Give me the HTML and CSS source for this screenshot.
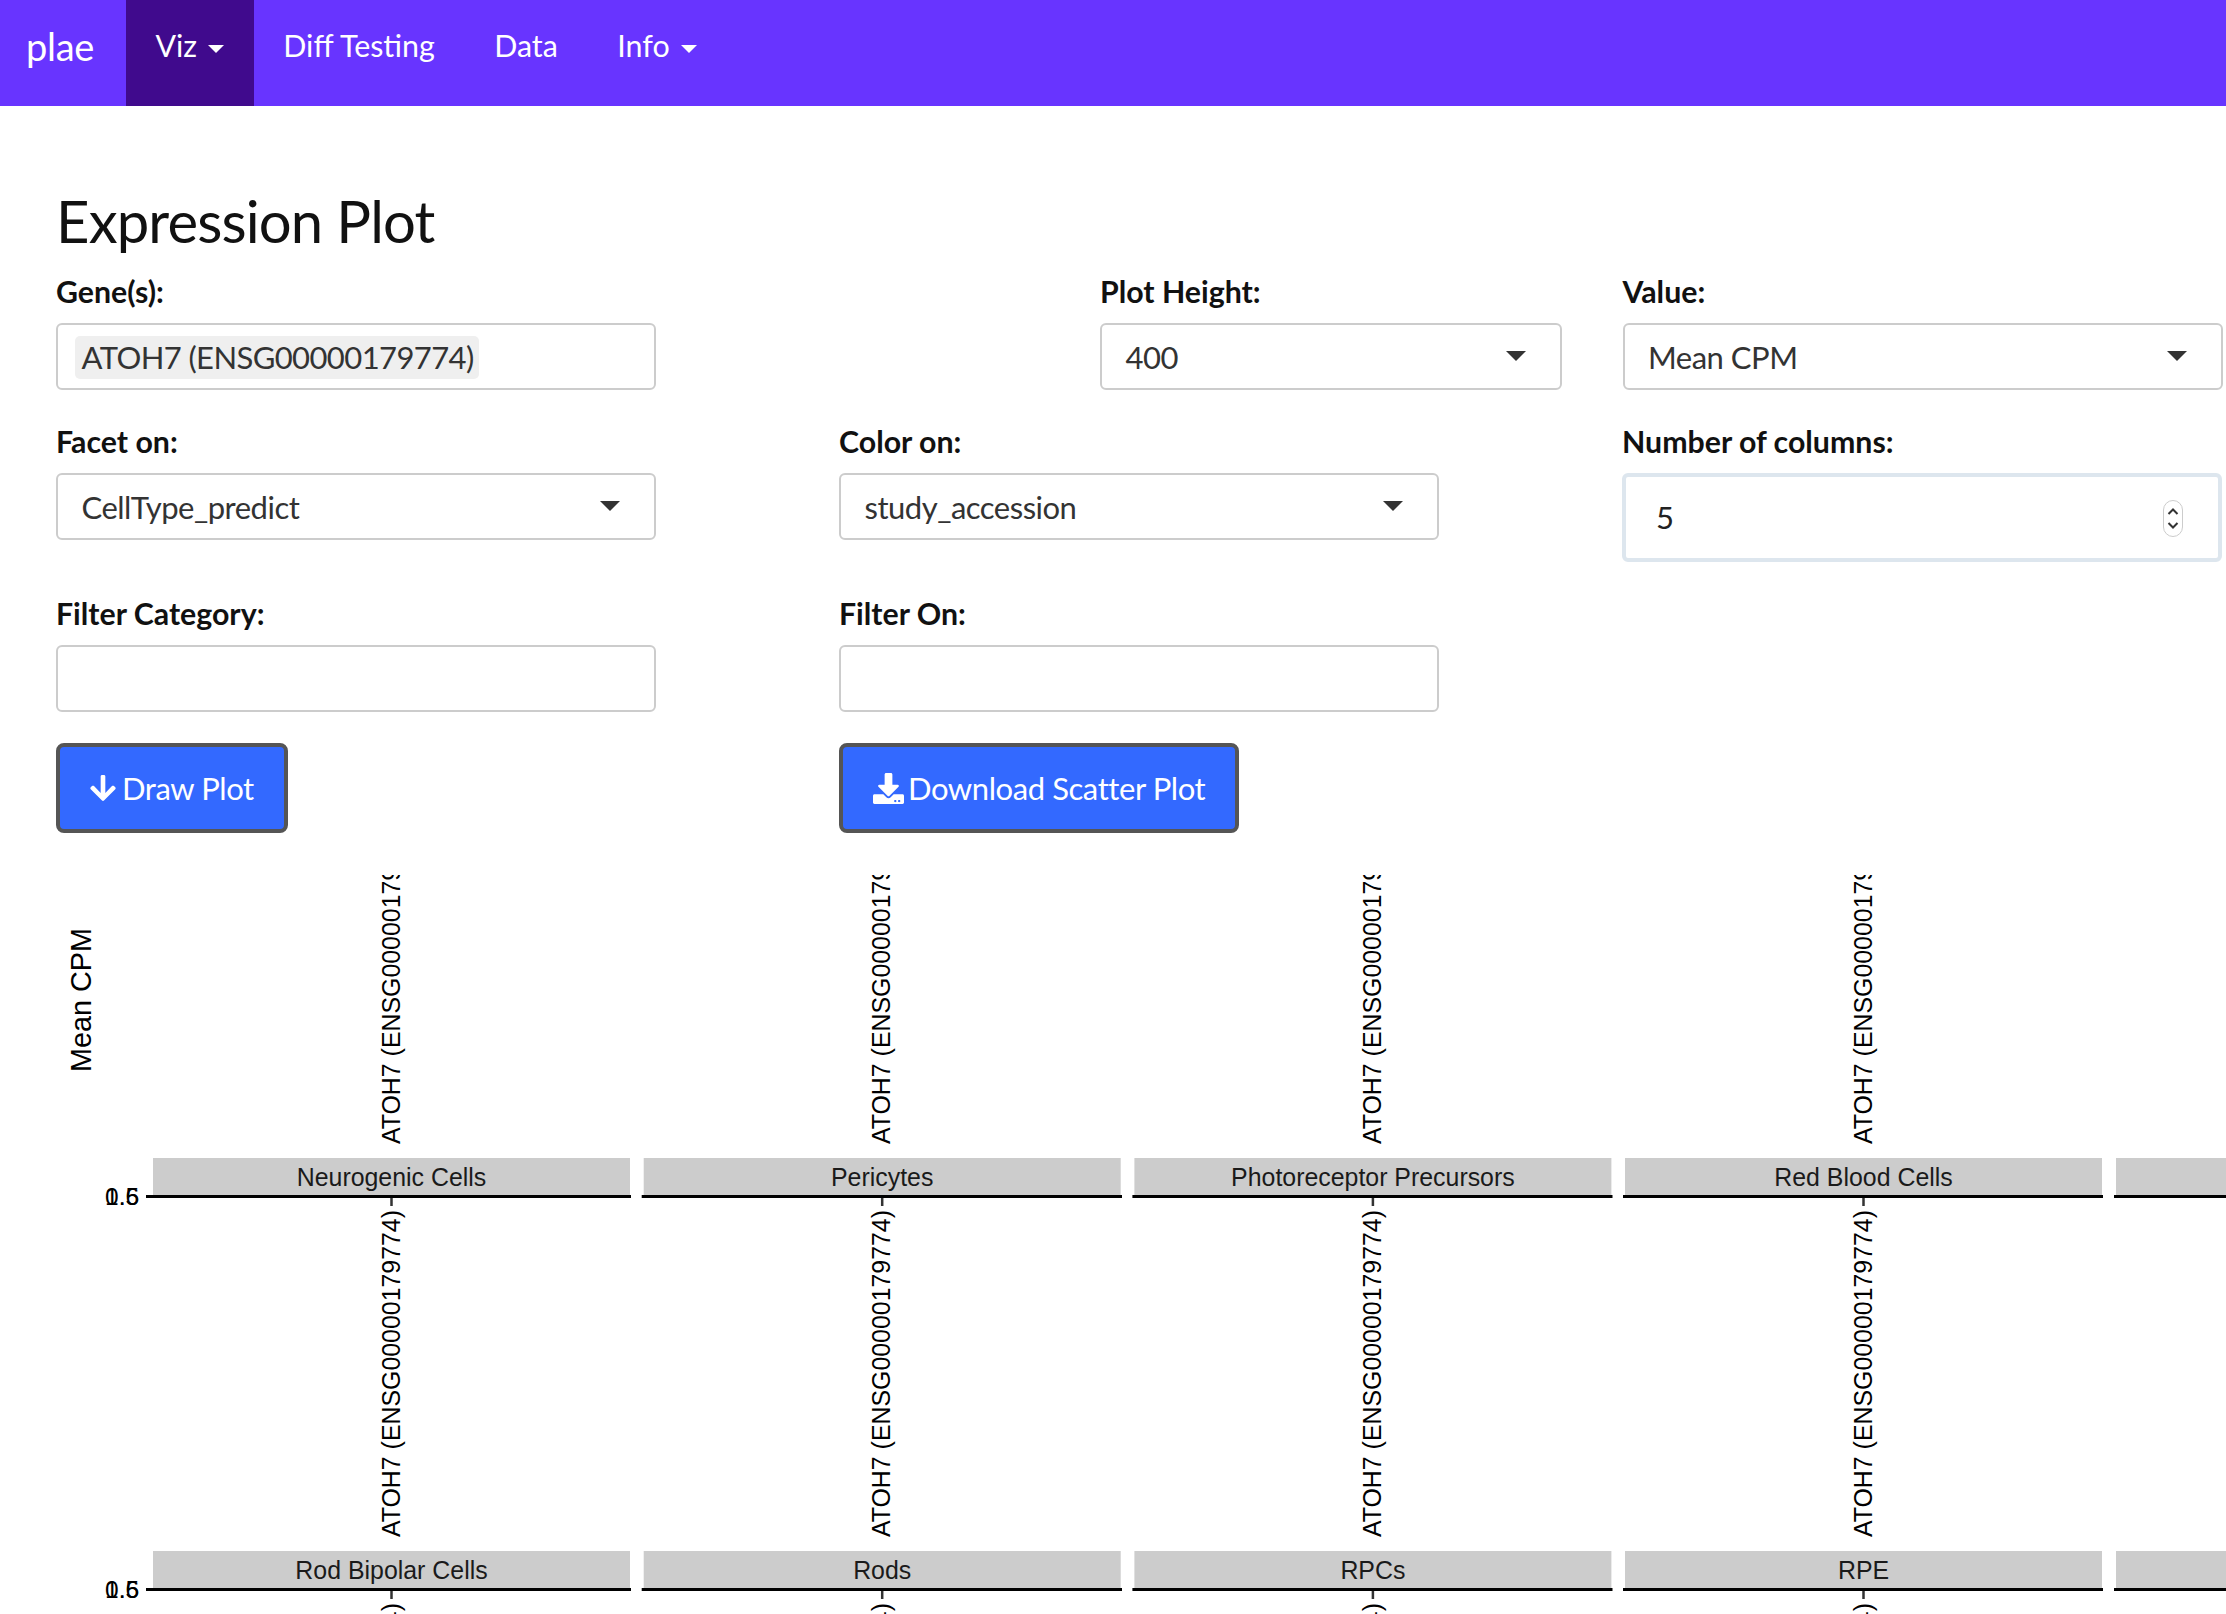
FILE: index.html
```html
<!DOCTYPE html>
<html lang="en">
<head>
    <meta charset="UTF-8">
    <title>plae - Expression Plot</title>
    <link rel="stylesheet" href="styles.css">
</head>
<body>
    <nav class="navbar">
        <a class="brand">plae</a>
        <a class="nav-item active">Viz<span class="caret"></span></a>
        <a class="nav-item">Diff Testing</a>
        <a class="nav-item">Data</a>
        <a class="nav-item">Info<span class="caret"></span></a>
    </nav>

    <div class="content">
        <h1>Expression Plot</h1>

        <div class="form-row row-top">
            <div class="field field-gene">
                <label>Gene(s):</label>
                <div class="control"><span class="chip">ATOH7 (ENSG00000179774)</span></div>
            </div>
            <div class="field field-height">
                <label>Plot Height:</label>
                <div class="control select">400<span class="select-arrow"></span></div>
            </div>
            <div class="field">
                <label>Value:</label>
                <div class="control select">Mean CPM<span class="select-arrow"></span></div>
            </div>
        </div>

        <div class="form-row">
            <div class="field">
                <label>Facet on:</label>
                <div class="control select">CellType_predict<span class="select-arrow"></span></div>
            </div>
            <div class="field">
                <label>Color on:</label>
                <div class="control select">study_accession<span class="select-arrow"></span></div>
            </div>
            <div class="field">
                <label>Number of columns:</label>
                <div class="number-input">
                    5
                    <svg class="spinner" viewBox="0 0 20 37" width="20" height="37">
                        <rect x="0.5" y="0.5" width="19" height="36" rx="9.5" fill="#fff" stroke="#ccc"/>
                        <path d="M5.5 14l4.5-4.5 4.5 4.5M5.5 23l4.5 4.5 4.5-4.5" fill="none" stroke="#333" stroke-width="2"/>
                    </svg>
                </div>
            </div>
        </div>

        <div class="form-row row-last">
            <div class="field">
                <label>Filter Category:</label>
                <div class="control"></div>
            </div>
            <div class="field">
                <label>Filter On:</label>
                <div class="control"></div>
            </div>
        </div>

        <div class="form-row">
            <div class="field">
                <button class="btn">
                    <svg class="icon-arrow" viewBox="0 0 448 512"><path d="M413.1 222.5l22.2 22.2c9.4 9.4 9.4 24.6 0 33.9L241 473c-9.4 9.4-24.6 9.4-33.9 0L12.7 278.6c-9.4-9.4-9.4-24.6 0-33.9l22.2-22.2c9.5-9.5 25-9.3 34.3.4L184 343.4V56c0-13.3 10.7-24 24-24h32c13.3 0 24 10.7 24 24v287.4l114.8-120.5c9.3-9.8 24.8-10 34.3-.4z"/></svg>
                    Draw Plot
                </button>
            </div>
            <div class="field">
                <button class="btn">
                    <svg class="icon-download" viewBox="0 0 512 512"><path d="M216 0h80c13.3 0 24 10.7 24 24v168h87.7c17.8 0 26.7 21.5 14.1 34.1L269.7 378.3c-7.5 7.5-19.8 7.5-27.3 0L90.1 226.1c-12.6-12.6-3.7-34.1 14.1-34.1H192V24c0-13.3 10.7-24 24-24zm296 376v112c0 13.3-10.7 24-24 24H24c-13.3 0-24-10.7-24-24V376c0-13.3 10.7-24 24-24h146.7l49 49c20.1 20.1 52.5 20.1 72.6 0l49-49H488c13.3 0 24 10.7 24 24zm-124 88c0-11-9-20-20-20s-20 9-20 20 9 20 20 20 20-9 20-20zm64 0c0-11-9-20-20-20s-20 9-20 20 9 20 20 20 20-9 20-20z"/></svg>
                    Download Scatter Plot
                </button>
            </div>
        </div>
    </div>

    <svg class="plot" viewBox="0 0 2226 739" width="2226" height="739">
        <text class="axis-title" transform="translate(90.5,125) rotate(-90)">Mean CPM</text>

        <!-- strips -->
        <rect class="strip" x="153" y="283" width="477" height="37"/>
        <rect class="strip" x="643.7" y="283" width="477" height="37"/>
        <rect class="strip" x="1134.4" y="283" width="477" height="37"/>
        <rect class="strip" x="1625" y="283" width="477" height="37"/>
        <rect class="strip" x="2116" y="283" width="477" height="37"/>
        <rect class="strip" x="153" y="676" width="477" height="37"/>
        <rect class="strip" x="643.7" y="676" width="477" height="37"/>
        <rect class="strip" x="1134.4" y="676" width="477" height="37"/>
        <rect class="strip" x="1625" y="676" width="477" height="37"/>
        <rect class="strip" x="2116" y="676" width="477" height="37"/>

        <text class="strip-label" x="391.5" y="311">Neurogenic Cells</text>
        <text class="strip-label" x="882.2" y="311">Pericytes</text>
        <text class="strip-label" x="1372.9" y="311">Photoreceptor Precursors</text>
        <text class="strip-label" x="1863.5" y="311">Red Blood Cells</text>
        <text class="strip-label" x="391.5" y="704">Rod Bipolar Cells</text>
        <text class="strip-label" x="882.2" y="704">Rods</text>
        <text class="strip-label" x="1372.9" y="704">RPCs</text>
        <text class="strip-label" x="1863.5" y="704">RPE</text>

        <!-- axis lines and ticks -->
        <path class="axis" d="M146 321.5H631M641.7 321.5H1122M1132.4 321.5H1612.5M1623 321.5H2103M2114 321.5H2226"/>
        <path class="axis" d="M146 714.5H631M641.7 714.5H1122M1132.4 714.5H1612.5M1623 714.5H2103M2114 714.5H2226"/>
        <path class="tick" d="M391.5 323v8M882.2 323v8M1372.9 323v8M1863.5 323v8M391.5 716v8M882.2 716v8M1372.9 716v8M1863.5 716v8"/>

        <!-- y labels are printed over each other, the panels have no range -->
        <text class="y-label" x="105" y="329.5">0.5</text>
        <text class="y-label" x="105" y="329.5">1.6</text>
        <text class="y-label" x="105" y="722.5">0.5</text>
        <text class="y-label" x="105" y="722.5">1.6</text>

        <!-- rotated x labels, row pitch is 393 -->
        <text class="x-label" transform="translate(399.5,269) rotate(-90)">ATOH7 (ENSG00000179774)</text>
        <text class="x-label" transform="translate(890.2,269) rotate(-90)">ATOH7 (ENSG00000179774)</text>
        <text class="x-label" transform="translate(1380.9,269) rotate(-90)">ATOH7 (ENSG00000179774)</text>
        <text class="x-label" transform="translate(1871.5,269) rotate(-90)">ATOH7 (ENSG00000179774)</text>
        <text class="x-label" transform="translate(399.5,662) rotate(-90)">ATOH7 (ENSG00000179774)</text>
        <text class="x-label" transform="translate(890.2,662) rotate(-90)">ATOH7 (ENSG00000179774)</text>
        <text class="x-label" transform="translate(1380.9,662) rotate(-90)">ATOH7 (ENSG00000179774)</text>
        <text class="x-label" transform="translate(1871.5,662) rotate(-90)">ATOH7 (ENSG00000179774)</text>
        <text class="x-label" transform="translate(399.5,1055) rotate(-90)">ATOH7 (ENSG00000179774)</text>
        <text class="x-label" transform="translate(890.2,1055) rotate(-90)">ATOH7 (ENSG00000179774)</text>
        <text class="x-label" transform="translate(1380.9,1055) rotate(-90)">ATOH7 (ENSG00000179774)</text>
        <text class="x-label" transform="translate(1871.5,1055) rotate(-90)">ATOH7 (ENSG00000179774)</text>
    </svg>
</body>
</html>
```

FILE: styles.css
```css
html, body {
    margin: 0;
    padding: 0;
    height: 1614px;
    overflow: hidden;
}
body {
    font-family: Lato, "Noto Sans", sans-serif;
    background-color: #fff;
    color: #111;
}
.navbar {
    display: flex;
    height: 106px;
    background-color: #6834ff;
    color: #fff;
}
.brand {
    flex: none;
    box-sizing: border-box;
    width: 126px;
    padding: 23px 0 0 26px;
    font-size: 38px;
    line-height: 46px;
    letter-spacing: -0.3px;
}
.nav-item {
    padding: 26px 29.7px 0;
    font-size: 30.4px;
    line-height: 38px;
}
.nav-item.active {
    background-color: #400a8d;
    padding-left: 29.5px;
    padding-right: 29.5px;
}
.caret {
    display: inline-block;
    margin-left: 11px;
    vertical-align: middle;
    border-top: 8px solid #fff;
    border-left: 8px solid transparent;
    border-right: 8px solid transparent;
}
.content {
    padding-left: 56px;
}
h1 {
    margin: 0;
    padding-top: 82px;
    height: 85px;
    font-size: 58px;
    font-weight: 400;
    line-height: 66px;
    letter-spacing: -0.85px;
}
.form-row {
    display: grid;
    grid-template-columns: 600px 600px 600px;
    column-gap: 183px;
    margin-bottom: 33px;
}
.row-top {
    grid-template-columns: 1044px 522.5px 600px;
    column-gap: 0;
}
.row-last {
    margin-bottom: 31px;
}
.row-top .field-gene {
    width: 600px;
}
.row-top .field-height {
    width: 462px;
}
label {
    display: block;
    margin-bottom: 12px;
    font-size: 30.3px;
    font-weight: 700;
    line-height: 37px;
    padding-bottom: 1px;
}
.control {
    position: relative;
    box-sizing: border-box;
    height: 67px;
    padding: 11px 17px;
    border: 2.5px solid #ccc;
    border-radius: 6px;
    font-size: 31px;
    line-height: 43px;
    letter-spacing: -0.5px;
    color: #333;
}
.select {
    padding-left: 23.5px;
}
.chip {
    display: inline-block;
    padding: 0 5px 0 6.5px;
    background-color: #efefef;
    border-radius: 5px;
    letter-spacing: -0.6px;
}
.select-arrow {
    position: absolute;
    top: 26px;
    right: 34px;
    border-top: 10px solid #333;
    border-left: 10px solid transparent;
    border-right: 10px solid transparent;
}
.number-input {
    position: relative;
    box-sizing: border-box;
    height: 89px;
    padding: 17px 30px;
    border: 4px solid #dde6ee;
    border-radius: 6px;
    font-size: 31px;
    line-height: 46px;
    color: #222;
}
.spinner {
    position: absolute;
    top: 23px;
    right: 35px;
}
.btn {
    display: inline-flex;
    align-items: center;
    box-sizing: border-box;
    height: 90px;
    padding: 0 30px;
    background-color: #3369ff;
    border: 4px solid #555;
    border-radius: 8px;
    color: #fff;
    font-family: Lato, sans-serif;
    font-size: 31px;
    letter-spacing: -0.42px;
    white-space: nowrap;
}
.btn svg {
    fill: #fff;
    margin-right: 6px;
}
.btn .icon-download {
    width: 31px;
    height: 31px;
    margin-right: 4px;
}
.icon-arrow {
    width: 26px;
    height: 30px;
}
.plot {
    display: block;
    margin-top: 42px;
}
.plot text {
    font-family: "Liberation Sans", Arial, sans-serif;
    fill: #000;
}
.plot .axis-title {
    font-size: 28.8px;
    text-anchor: middle;
}
.plot .strip-label {
    font-size: 24.9px;
    text-anchor: middle;
    fill: #1a1a1a;
}
.plot .x-label {
    font-size: 24.9px;
}
.plot .y-label {
    font-size: 24.5px;
}
.strip {
    fill: #ccc;
}
.axis {
    stroke: #000;
    stroke-width: 3;
    fill: none;
}
.tick {
    stroke: #333;
    stroke-width: 2.5;
    fill: none;
}
```
